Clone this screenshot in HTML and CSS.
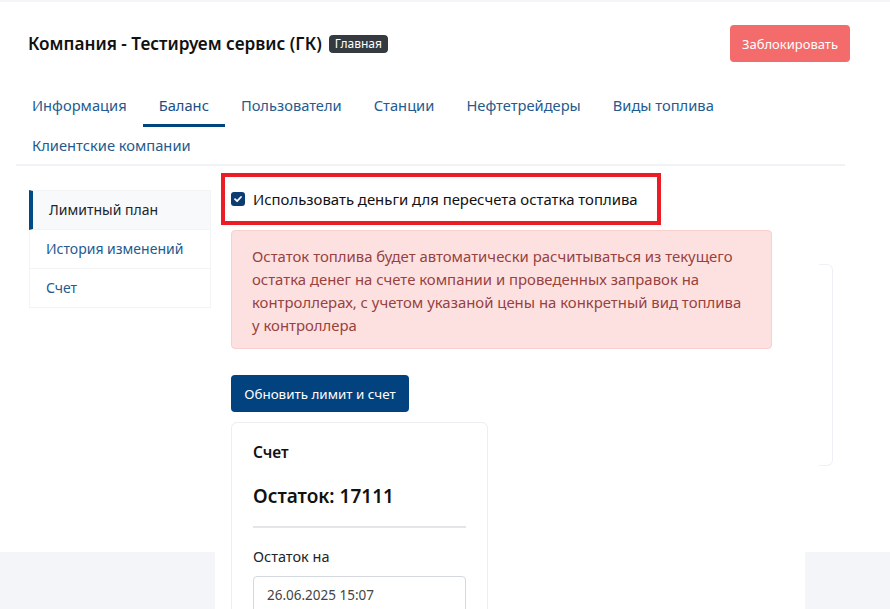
FILE: index.html
```html
<!DOCTYPE html>
<html lang="ru">
<head>
    <meta charset="UTF-8">
    <meta name="viewport" content="width=device-width, initial-scale=1.0">
    <title>Компания - Тестируем сервис (ГК)</title>
    <link rel="stylesheet" href="styles.css">
</head>
<body>
    <div class="page">
        <div class="header">
            <h1 class="title">Компания - Тестируем сервис (ГК) <span class="badge">Главная</span></h1>
            <button class="btn-block">Заблокировать</button>
        </div>

        <div class="tabs">
            <ul class="tab-list">
                <li class="tab">Информация</li>
                <li class="tab active">Баланс</li>
                <li class="tab">Пользователи</li>
                <li class="tab">Станции</li>
                <li class="tab">Нефтетрейдеры</li>
                <li class="tab">Виды топлива</li>
                <li class="tab">Клиентские компании</li>
            </ul>
        </div>

        <div class="body-row">
            <ul class="side-nav">
                <li class="side-item active">Лимитный план</li>
                <li class="side-item">История изменений</li>
                <li class="side-item">Счет</li>
            </ul>

            <div class="content">
                <div class="marked">
                    <label class="check-label">
                        <span class="check-box">
                            <svg width="10" height="10" viewBox="0 0 10 10"><path d="M2 5.2 L4.1 7.2 L8 3" fill="none" stroke="#fff" stroke-width="1.8" stroke-linecap="round" stroke-linejoin="round"/></svg>
                        </span>
                        Использовать деньги для пересчета остатка топлива
                    </label>
                </div>

                <div class="alert">
                    Остаток топлива будет автоматически расчитываться из текущего<br>
                    остатка денег на счете компании и проведенных заправок на<br>
                    контроллерах, с учетом указаной цены на конкретный вид топлива<br>
                    у контроллера
                </div>

                <button class="btn-update">Обновить лимит и счет</button>

                <div class="card">
                    <div class="card-title">Счет</div>
                    <div class="card-sum">Остаток: 17111</div>
                    <hr class="card-line">
                    <label class="field-label">Остаток на</label>
                    <div class="field">26.06.2025 15:07</div>
                </div>
            </div>

            <div class="side-card"></div>
        </div>
    </div>
</body>
</html>
```

FILE: styles.css
```css
body {
    margin: 0;
    font-family: "Noto Sans", "Open Sans", sans-serif;
    background-color: #f4f5f8;
    color: #212529;
}
.page {
    margin-top: 2px;
    height: 607px;
    overflow: hidden;
    background: linear-gradient(#fff 550px, transparent 550px);
}
.header {
    display: flex;
    justify-content: space-between;
    align-items: center;
    padding: 23px 40px 0 28px;
}
.title {
    margin: 0;
    font-size: 17.2px;
    font-weight: 600;
    color: #111;
    display: flex;
    align-items: center;
    gap: 7px;
}
.badge {
    display: inline-block;
    background-color: #343a40;
    color: #fff;
    font-size: 12px;
    font-weight: 400;
    line-height: 18px;
    padding: 0 6px;
    border-radius: 4px;
}
.btn-block {
    width: 120px;
    height: 37px;
    border: none;
    border-radius: 4px;
    background-color: #f36b6b;
    color: #fff;
    font-family: inherit;
    font-size: 13px;
}
.tabs {
    margin: 25px 45px 0 16px;
    border-bottom: 2px solid #f1f2f5;
}
.tab-list {
    list-style: none;
    margin: 0 0 -3px 0;
    padding: 0;
    display: flex;
    flex-wrap: wrap;
    width: 740px;
}
.tab {
    padding: 7px 16px 8px;
    line-height: 22px;
    font-size: 14.7px;
    color: #245b8e;
    border-bottom: 3px solid transparent;
}
.tab.active {
    color: #1c4f7f;
    border-bottom-color: #00457f;
}
.body-row {
    display: flex;
    align-items: flex-start;
    padding-left: 29px;
}
.side-nav {
    list-style: none;
    margin: 24px 4px 0 0;
    padding: 0;
    width: 182px;
}
.side-item {
    height: 38px;
    line-height: 38px;
    padding-left: 16px;
    font-size: 14px;
    color: #245b8e;
    border: 1px solid #f3f4f6;
    border-top: none;
}
.side-item.active {
    border-left: 4px solid #004a86;
    border-top: 1px solid #f3f4f6;
    background-color: #f8f9fa;
    color: #212529;
}
.content {
    width: 590px;
    padding-top: 7px;
    padding-bottom: 40px;
    background-color: #fff;
}
.marked {
    margin-left: 6px;
    width: 432px;
    height: 44px;
    border: 4px solid #ec1c24;
    display: flex;
    align-items: center;
}
.check-label {
    display: flex;
    align-items: center;
    gap: 8px;
    padding-left: 6px;
    font-size: 14.9px;
    color: #111;
}
.check-box {
    width: 14px;
    height: 14px;
    border-radius: 3px;
    background-color: #0b3d73;
    display: flex;
    align-items: center;
    justify-content: center;
}
.alert {
    margin: 5px 33px 0 16px;
    padding: 14px 20px 11px;
    background-color: #fde1e1;
    border: 1px solid #f8d0d0;
    border-radius: 4px;
    color: #97423f;
    font-size: 14.9px;
    line-height: 23px;
}
.btn-update {
    display: block;
    margin: 26px 0 0 16px;
    width: 178px;
    height: 37px;
    border: none;
    border-radius: 4px;
    background-color: #01427f;
    color: #fff;
    font-family: inherit;
    font-size: 13.4px;
}
.card {
    margin: 10px 0 0 16px;
    width: 213px;
    padding: 18px 21px 20px;
    border: 1px solid #eceef2;
    border-radius: 6px;
}
.card-title {
    font-size: 15.5px;
    font-weight: 600;
    color: #111;
    line-height: 22px;
}
.card-sum {
    margin-top: 20px;
    font-size: 19px;
    font-weight: 600;
    color: #111;
    line-height: 26px;
}
.card-line {
    margin: 17px 0 16px;
    border: none;
    border-top: 2px solid #e3e5e9;
}
.field-label {
    display: block;
    font-size: 14.5px;
    line-height: 24px;
    color: #212529;
}
.field {
    margin-top: 8px;
    height: 36px;
    line-height: 36px;
    padding-left: 13px;
    border: 1px solid #d5d9de;
    border-radius: 4px;
    font-size: 13.5px;
    color: #444;
}
.side-card {
    margin: 98px 0 0 14px;
    width: 13px;
    height: 200px;
    border: 1px solid #eef0f6;
    border-left: none;
    border-radius: 0 6px 6px 0;
}
```
